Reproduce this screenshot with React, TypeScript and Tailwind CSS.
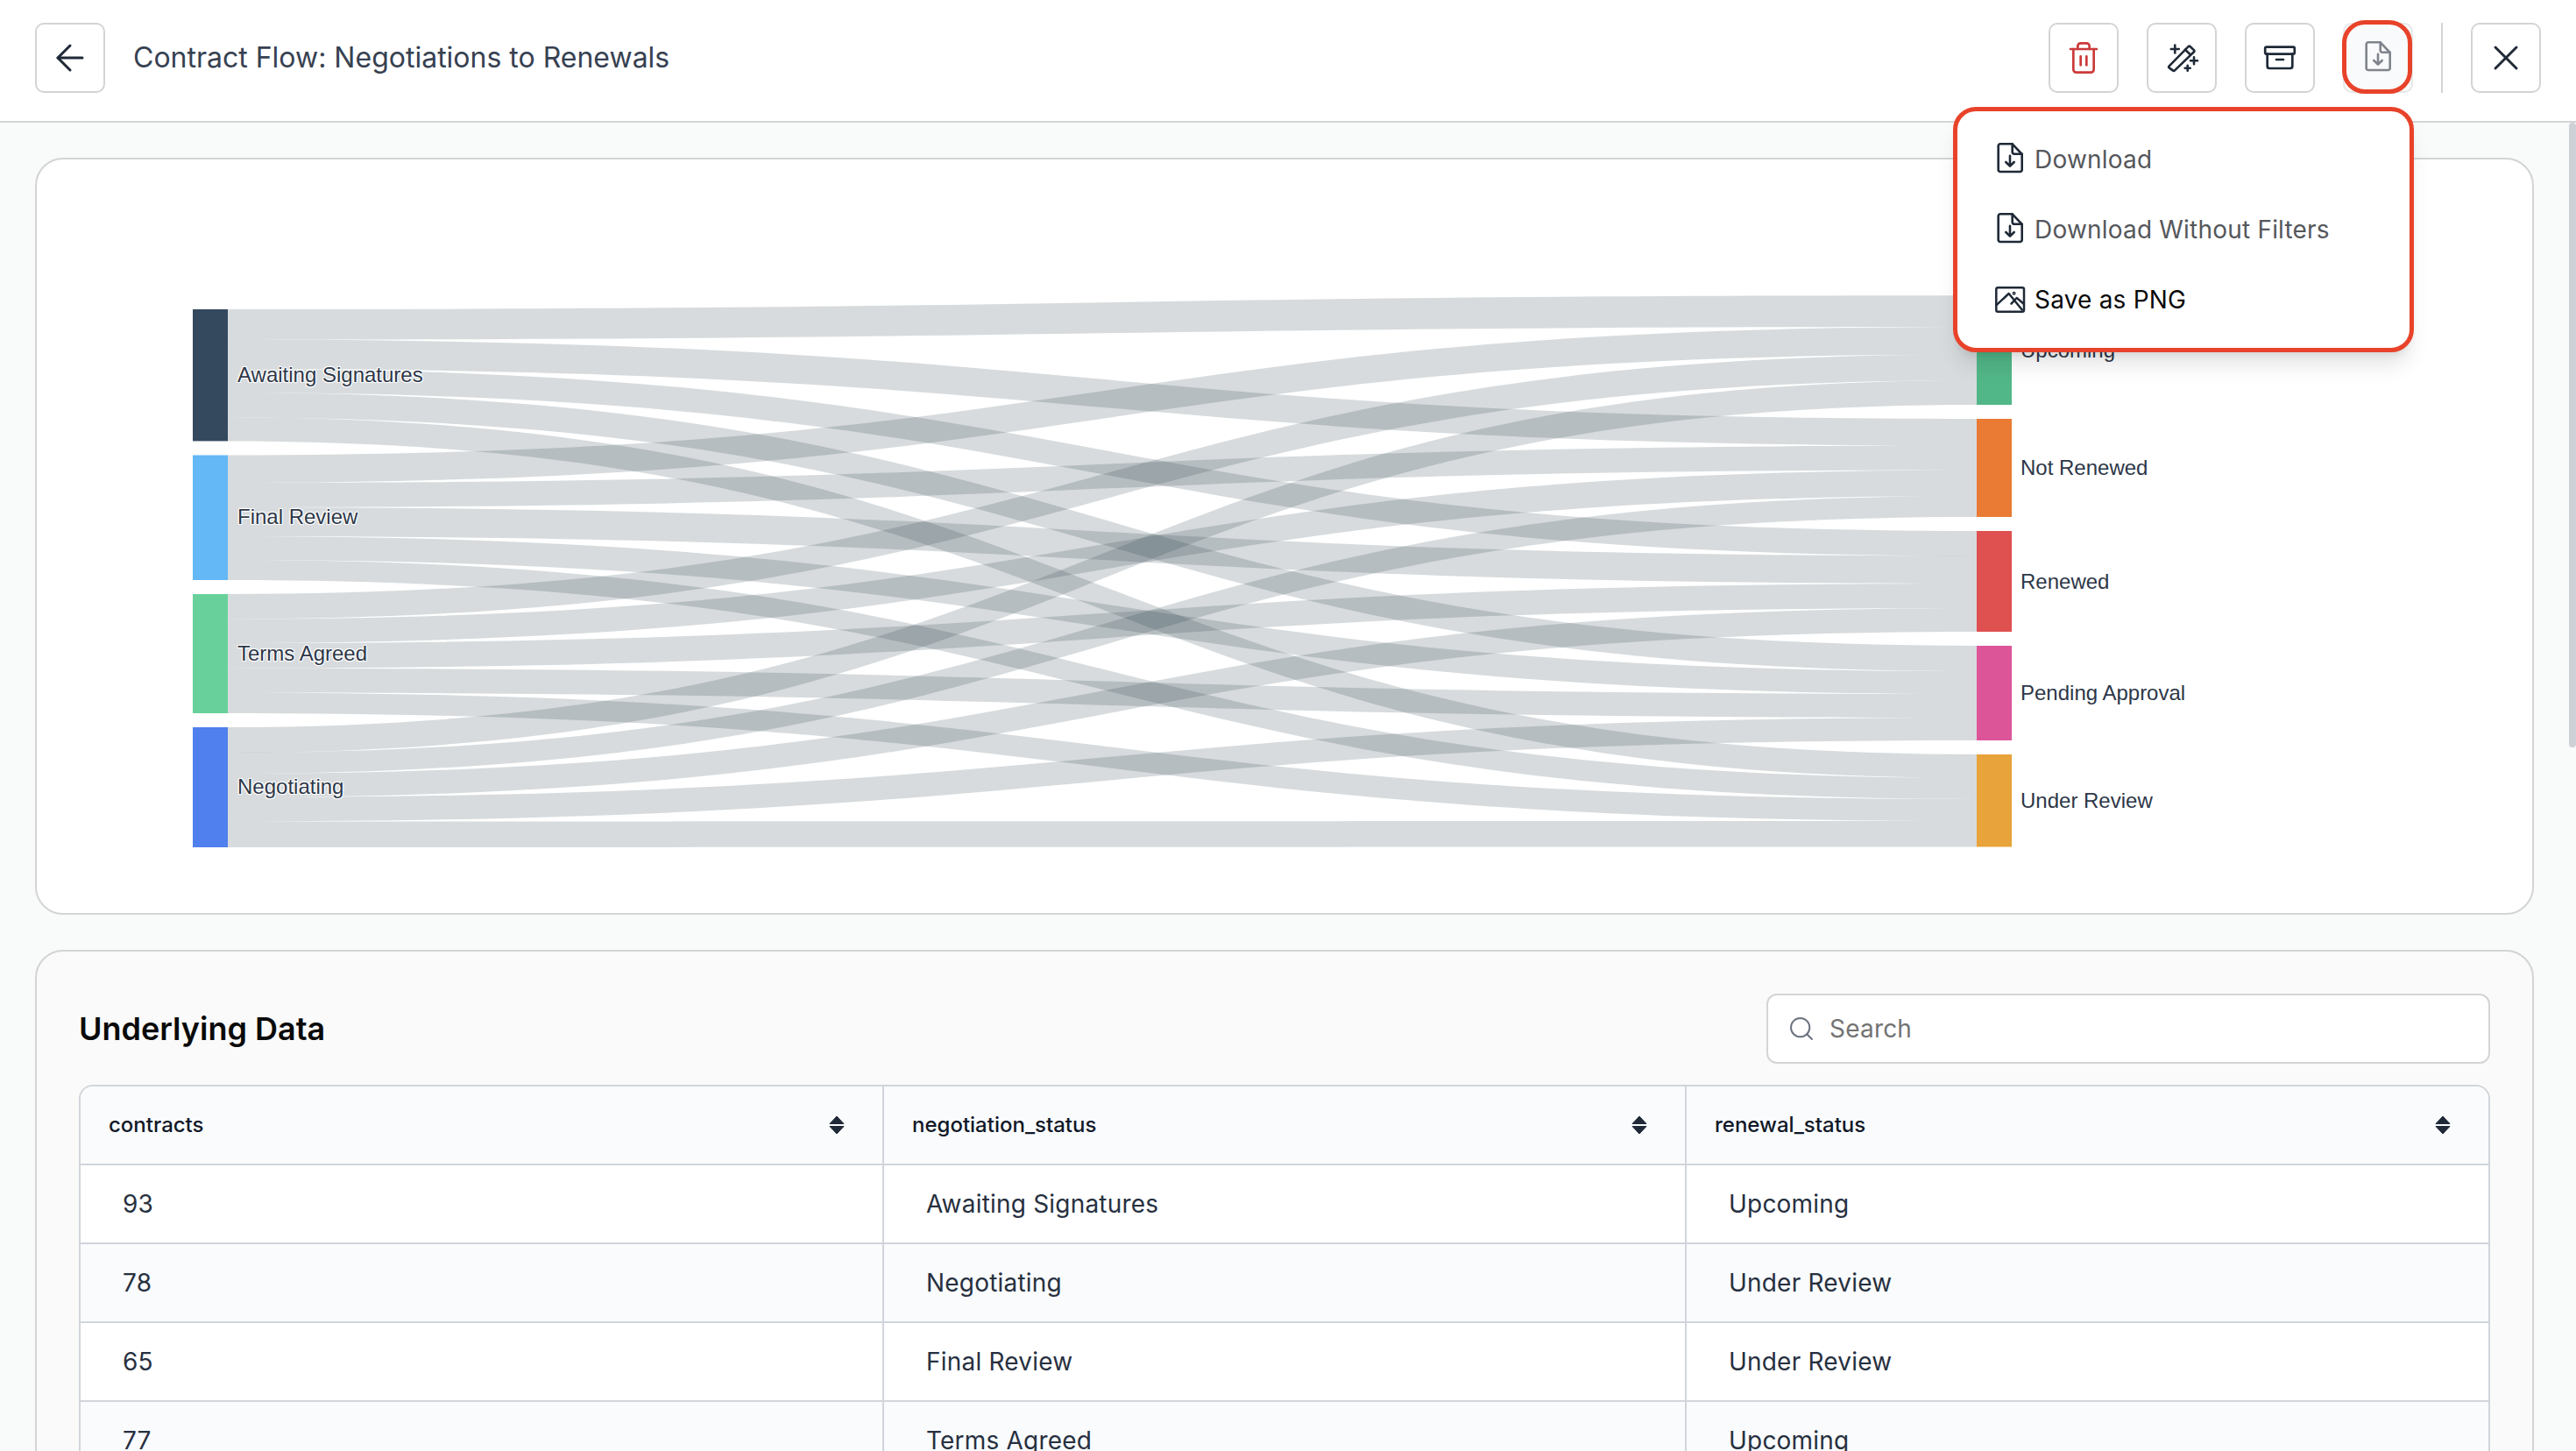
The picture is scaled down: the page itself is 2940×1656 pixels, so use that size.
import React from "react";
import { ArrowLeft, Search, Trash2, X } from "lucide-react";

const LEFT = [
  { name: "Awaiting Signatures", color: "#34495e", ys: [353, 387.6, 421, 448, 476.5, 503.4] },
  { name: "Final Review", color: "#63b8f5", ys: [519.5, 551, 579, 612, 639, 662] },
  { name: "Terms Agreed", color: "#68d19b", ys: [678, 706.4, 734, 762.7, 790.5, 814] },
  { name: "Negotiating", color: "#4f80ed", ys: [830, 859, 883, 910, 937.5, 967] },
];
const RIGHT = [
  { name: "Upcoming", color: "#52b788", ys: [337.3, 373, 404.6, 434, 462] },
  { name: "Not Renewed", color: "#e97b34", ys: [478, 508.6, 536.4, 566, 590] },
  { name: "Renewed", color: "#df5050", ys: [606, 634.4, 666, 694, 721] },
  { name: "Pending Approval", color: "#dd5599", ys: [737, 766, 792, 819, 845] },
  { name: "Under Review", color: "#e8a33a", ys: [861, 888, 912, 937, 966.5] },
];
const X0 = 260;
const X1 = 2256;
const XM = (X0 + X1) / 2;

function linkPath(a0: number, a1: number, b0: number, b1: number) {
  return `M${X0} ${a0}C${XM} ${a0} ${XM} ${b0} ${X1} ${b0}L${X1} ${b1}C${XM} ${b1} ${XM} ${a1} ${X0} ${a1}Z`;
}

const HALO = "[text-shadow:1px_1px_1px_#fff,-1px_-1px_1px_#fff,1px_-1px_1px_#fff,-1px_1px_1px_#fff]";

function Sankey() {
  const paths: string[] = [];
  LEFT.forEach((l, i) => {
    RIGHT.forEach((r, j) => {
      paths.push(linkPath(l.ys[j], l.ys[j + 1], r.ys[i], r.ys[i + 1]));
    });
  });
  return (
    <svg viewBox="42 182 2848 860" className="block w-full h-[860px]">
      {paths.map((d, i) => (
        <path key={i} d={d} fill="#2d424c" fillOpacity={0.19} />
      ))}
      {LEFT.map((n) => (
        <g key={n.name}>
          <rect x={220} y={n.ys[0]} width={40} height={n.ys[5] - n.ys[0]} fill={n.color} />
          <text
            x={271}
            y={(n.ys[0] + n.ys[5]) / 2 + 7.5}
            fontSize={24}
            fill="#2d3748"
            className={`[font-family:'Liberation_Sans',Arial,sans-serif] ${HALO}`}
          >
            {n.name}
          </text>
        </g>
      ))}
      {RIGHT.map((n) => (
        <g key={n.name}>
          <rect x={2256} y={n.ys[0]} width={40} height={n.ys[4] - n.ys[0]} fill={n.color} />
          <text
            x={2306}
            y={(n.ys[0] + n.ys[4]) / 2 + 8}
            fontSize={24}
            fill="#2d3748"
            className={`[font-family:'Liberation_Sans',Arial,sans-serif] ${HALO}`}
          >
            {n.name}
          </text>
        </g>
      ))}
    </svg>
  );
}

function FileDown({ color }: { color: string }) {
  return (
    <svg width="40" height="40" viewBox="0 0 40 40" fill="none" stroke={color} strokeWidth="2.6" strokeLinecap="round" strokeLinejoin="round" className="shrink-0">
      <path d="M9 2.3h13.7l11 11.7v17.7a2.3 2.3 0 0 1-2.3 2.3H9a2.3 2.3 0 0 1-2.3-2.3V4.6A2.3 2.3 0 0 1 9 2.3z" />
      <path d="M22.7 2.3v9a2.5 2.5 0 0 0 2.5 2.5h8.5" />
      <path d="M20 15.7v11.6M15.3 23l4.7 4.7 4.7-4.7" />
    </svg>
  );
}

function ImageIcon() {
  return (
    <svg width="40" height="40" viewBox="0 0 40 40" fill="none" stroke="#1f2937" strokeWidth="2.5" strokeLinecap="round" strokeLinejoin="round" className="shrink-0">
      <rect x="4.3" y="6.3" width="31.7" height="27.4" rx="2" />
      <path d="M4.3 26.3 18.7 13l15 18.5" />
      <path d="M21.5 24.7 27.7 18l8.3 7" />
      <circle cx="24.6" cy="12.8" r="0.7" />
    </svg>
  );
}

function WandIcon() {
  return (
    <svg width="40" height="40" viewBox="0 0 40 40" fill="none" stroke="#1f2937" strokeWidth="2.6" strokeLinecap="round" strokeLinejoin="round">
      <path d="M5.7 29.3 27.6 7.2a1.6 1.6 0 0 1 2.2 0l4.1 3.9a1.6 1.6 0 0 1 0 2.2L12 34.4a1.6 1.6 0 0 1-2.2 0l-4.1-3a1.5 1.5 0 0 1 0-2.1z" />
      <path d="M24 10.7l5.3 5" />
      <path d="M12.3 5.5v9M7.8 10h9" />
      <path d="M34 19.3v8M30 23.3h8" />
      <path d="M26.7 28.7v6M23.7 31.7h6" />
    </svg>
  );
}

function ArchiveIcon() {
  return (
    <svg width="40" height="40" viewBox="0 0 40 40" fill="none" stroke="#1f2937" strokeWidth="2.7" strokeLinecap="round" strokeLinejoin="round">
      <rect x="3.2" y="7.7" width="33.6" height="8" rx="1.6" />
      <path d="M5.7 15.7V29.5a2.5 2.5 0 0 0 2.5 2.5h23.6a2.5 2.5 0 0 0 2.5-2.5V15.7" />
      <path d="M16 22h8" />
    </svg>
  );
}

function SortIcon() {
  return (
    <svg width="18" height="22" viewBox="0 0 18 22" fill="#1f2937" stroke="#1f2937" strokeWidth="1" strokeLinejoin="round" className="shrink-0">
      <path d="M9 1 17 9.5H1z" />
      <path d="M9 21 17 12.5H1z" />
    </svg>
  );
}

const BTN = "flex h-20 w-20 shrink-0 items-center justify-center rounded-[10px] border-2 border-[#d4d4d4] bg-white";

const ROWS = [
  ["93", "Awaiting Signatures", "Upcoming"],
  ["78", "Negotiating", "Under Review"],
  ["65", "Final Review", "Under Review"],
  ["77", "Terms Agreed", "Upcoming"],
];
const HEADS = ["contracts", "negotiation_status", "renewal_status"];

export default function App() {
  return (
    <div className="flex h-screen w-screen flex-col overflow-hidden bg-[#f9fafa] [font-family:Inter,sans-serif]">
      <header className="relative z-10 flex h-[140px] shrink-0 items-start border-b-2 border-[#d4d4d4] bg-white px-10 pt-[26px]">
        <button className={BTN}>
          <ArrowLeft size={48} strokeWidth={1.5} color="#1f2937" />
        </button>
        <h1 className="ml-8 flex h-20 items-center text-[32px] font-normal text-[#374151]">
          Contract Flow: Negotiations to Renewals
        </h1>
        <div className="ml-auto flex items-center gap-8">
          <button className={BTN}>
            <Trash2 size={40} strokeWidth={1.6} color="#cb3a3a" />
          </button>
          <button className={BTN}>
            <WandIcon />
          </button>
          <button className={BTN}>
            <ArchiveIcon />
          </button>
          <div className="relative h-20 w-20">
            <button className="flex h-20 w-20 items-center justify-center rounded-[10px] border-2 border-[#e8e8ea] bg-[#f9fafb]">
              <FileDown color="#80848c" />
            </button>
            <div className="absolute left-[-1px] top-[-3px] h-[84px] w-20 rounded-[26px] border-[5px] border-[#e8432a]" />
            <div className="absolute right-[-1px] top-[96px] w-[526px] rounded-[26px] border-[5px] border-[#e8432a] bg-white py-[15px] pl-10 text-[28px] tracking-[0.2px] shadow-xl">
              <div className="flex h-20 items-center gap-2 text-[#55575b]">
                <FileDown color="#1f2937" />
                <span>Download</span>
              </div>
              <div className="flex h-20 items-center gap-2 text-[#55575b]">
                <FileDown color="#1f2937" />
                <span>Download Without Filters</span>
              </div>
              <div className="flex h-20 items-center gap-2 text-[#0a0a0a]">
                <ImageIcon />
                <span>Save as PNG</span>
              </div>
            </div>
          </div>
          <div className="h-20 w-0.5 bg-[#d4d4d4]" />
          <button className={BTN}>
            <X size={48} strokeWidth={1.5} color="#1f2937" />
          </button>
        </div>
      </header>

      <main className="relative flex-1 overflow-hidden pb-10 pl-10 pr-12 pt-10">
        <div className="absolute right-0 top-0 h-[713px] w-2 rounded-full bg-[#ced1d6]" />
        <section className="overflow-hidden rounded-[32px] border-2 border-[#d4d4d4] bg-white">
          <Sankey />
        </section>
        <section className="mt-10 rounded-[32px] border-2 border-[#d4d4d4] bg-[#fafafa] p-12">
          <div className="flex items-center justify-between">
            <h2 className="text-[36px] font-semibold text-[#0a0a0a]">Underlying Data</h2>
            <div className="flex h-20 w-[826px] items-center gap-4 rounded-xl border-2 border-[#d4d4d4] bg-white pl-[22px]">
              <Search size={32} strokeWidth={1.5} color="#6b7280" />
              <input
                placeholder="Search"
                className="flex-1 bg-transparent text-[28px] tracking-[0.2px] text-[#1f2937] outline-none placeholder:text-[#737373]"
              />
            </div>
          </div>
          <div className="mt-6 overflow-hidden rounded-2xl border-2 border-[#d1d5db] bg-white">
            <div className="grid grid-cols-[917px_916px_1fr] border-b-2 border-[#d1d5db] bg-[#f9fbfd]">
              {HEADS.map((h, i) => (
                <div
                  key={h}
                  className={`flex h-[88px] items-center justify-between pl-8 pr-[43px] text-2xl font-medium text-[#111827] ${i < 2 ? "border-r-2 border-[#d1d5db]" : ""}`}
                >
                  <span>{h}</span>
                  <SortIcon />
                </div>
              ))}
            </div>
            {ROWS.map((r, ri) => (
              <div
                key={ri}
                className={`grid grid-cols-[917px_916px_1fr] border-b-2 border-[#d1d5db] ${ri % 2 ? "bg-[#f9fbfd]" : "bg-white"}`}
              >
                {r.map((c, i) => (
                  <div
                    key={i}
                    className={`flex h-[88px] items-center px-12 text-[28px] tracking-[0.2px] text-[#27303f] ${i < 2 ? "border-r-2 border-[#d1d5db]" : ""}`}
                  >
                    {c}
                  </div>
                ))}
              </div>
            ))}
          </div>
        </section>
      </main>
    </div>
  );
}
